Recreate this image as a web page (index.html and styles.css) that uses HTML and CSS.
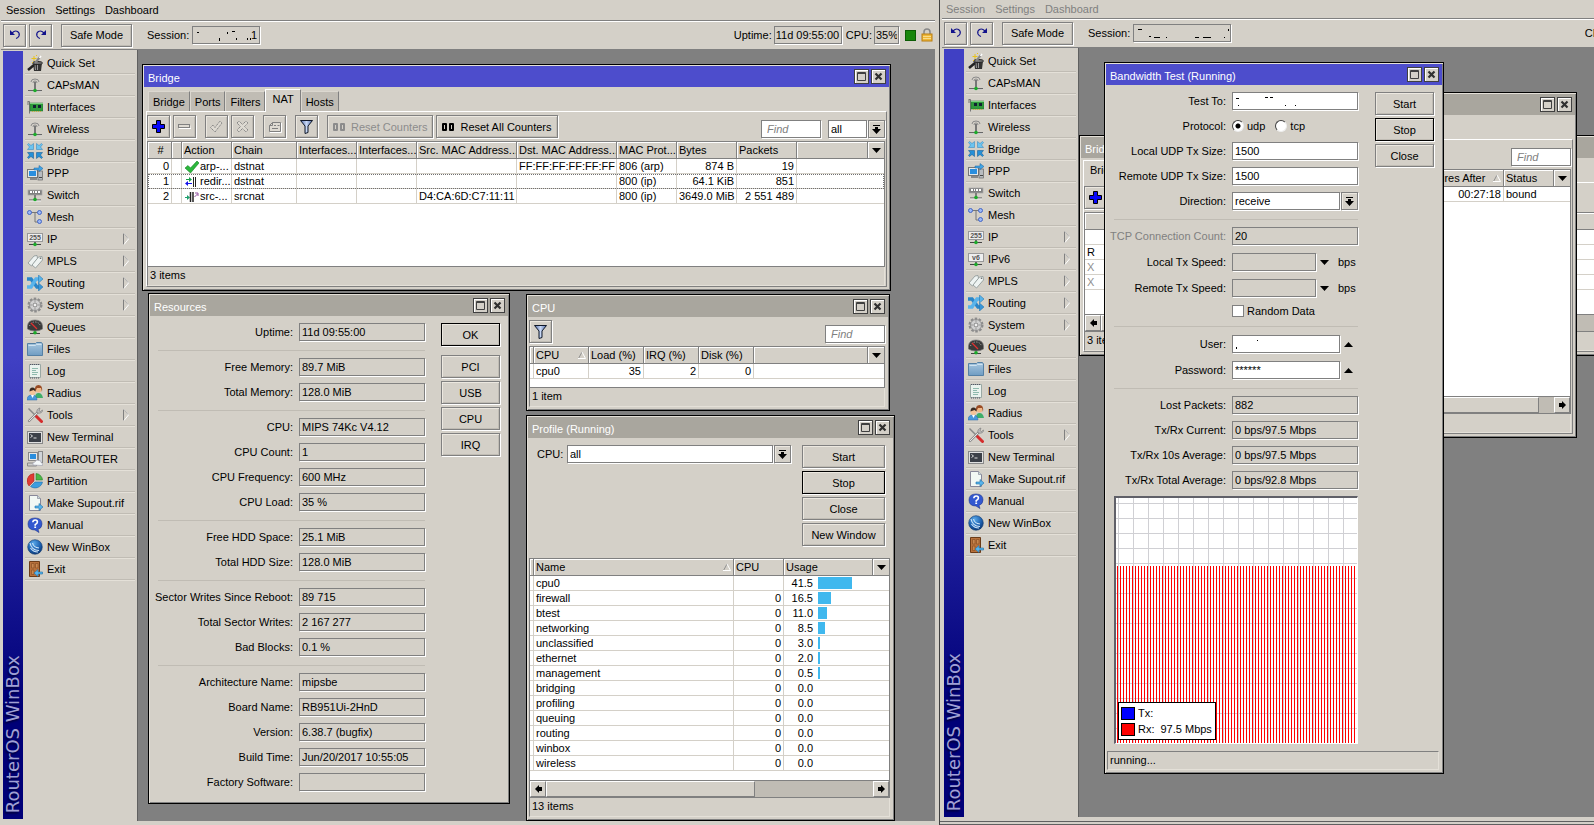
FILE: index.html
```html
<!DOCTYPE html>
<html lang="en">
<head>
<meta charset="utf-8">
<title>RouterOS WinBox</title>
<link rel="stylesheet" href="styles.css">
</head>
<body>
<svg class="sprite" aria-hidden="true">
  <defs>
    <linearGradient id="g-folder" x1="0" y1="0" x2="0" y2="1"><stop offset="0" stop-color="#a9c8e0"/><stop offset="1" stop-color="#6f9cc2"/></linearGradient>
    <linearGradient id="g-funnel" x1="0" y1="0" x2="1" y2="0"><stop offset="0" stop-color="#4d68a8"/><stop offset=".5" stop-color="#c8d8f4"/><stop offset="1" stop-color="#4d68a8"/></linearGradient>
    <radialGradient id="g-ball" cx=".4" cy=".25" r=".8"><stop offset="0" stop-color="#5aa8e8"/><stop offset=".6" stop-color="#1c5fae"/><stop offset="1" stop-color="#0a3470"/></radialGradient>
    <pattern id="p-grid" x="2" y="5" width="15" height="15" patternUnits="userSpaceOnUse"><path d="M0 0H15V1H1V15H0Z" fill="#d0d0d4"/></pattern>
    <pattern id="p-rx" x="1" y="0" width="3" height="3" patternUnits="userSpaceOnUse"><rect width="1" height="3" fill="#f00"/></pattern>
  </defs>
  <symbol id="i-quick" viewBox="0 0 16 16"><path d="M6 8h9l-1 8H7z" fill="#333"/><path d="M8 10l.5 5M10.500 10v5" stroke="#999" stroke-width="1"/><ellipse cx="10.500" cy="8" rx="5" ry="1.500" fill="#777" stroke="#222"/><path d="M1 15l6-5" stroke="#222" stroke-width="2.500"/><path d="M8 8l5-6" stroke="#888" stroke-width="2"/><path d="M12.500 3l1.500-2" stroke="#fff" stroke-width="1.500"/><path d="M7 1v5M4.500 3.500h5M5 7.500h1M9 .500h1" stroke="#e8c21c"/></symbol>
  <symbol id="i-ant" viewBox="0 0 16 16"><path d="M4 5q0-3 4-3t4 3M6 6q0-2 2-2t2 2" fill="none" stroke="#8a8a8a"/><path d="M8 5v8" stroke="#777" stroke-width="2"/><path d="M1 13.500h14" stroke="#666"/><path d="M2 14.500h12" stroke="#ccc"/><circle cx="8" cy="13.500" r="1.800" fill="#1cab2a"/></symbol>
  <symbol id="i-card" viewBox="0 0 16 16"><path d="M.5 2.500h2v12M1 3v3" stroke="#777" fill="none"/><rect x="3" y="4" width="13" height="8" fill="#2f9a3c" stroke="#1c6c28" stroke-width=".5"/><path d="M3 4.500h13" stroke="#7fce84"/><rect x="6" y="6" width="3" height="3" fill="#123"/><rect x="11" y="6" width="3" height="3" fill="#123"/><path d="M5 12.500h10" stroke="#c8b040" stroke-dasharray="1 1"/></symbol>
  <symbol id="i-bridge" viewBox="0 0 16 16"><g fill="#6cc4f0" stroke="#2c7eb8" stroke-width=".5"><path d="M.5 1.500l1-1 2.500 2L6.500.500v6h-6l2-2.500z"/><path d="M15.500 1.500l-1-1-2.500 2L9.500.500v6h6l-2-2.500z"/></g><g fill="#2490d8" stroke="#0d5088" stroke-width=".5"><path d="M.5 14.500l1 1 2.500-2 2.500 2v-6h-6l2 2.500z"/><path d="M15.500 14.500l-1 1-2.500-2-2.500 2v-6h6l-2 2.500z"/></g></symbol>
  <symbol id="i-ppp" viewBox="0 0 16 16"><rect x=".5" y="4.500" width="10" height="8" fill="#e4e8ea" stroke="#777"/><rect x="2" y="6" width="7" height="5" fill="#2a8ede"/><path d="M3 14h7" stroke="#888" stroke-width="2"/><rect x="11" y="6" width="4.500" height="9" fill="#b8bcc0" stroke="#666" stroke-width=".7"/><path d="M12 12.500h3" stroke="#444"/><path d="M7 3h5V.500l4 3-4 3V5H7z" fill="#40a4e4" stroke="#1860a0" stroke-width=".5"/></symbol>
  <symbol id="i-switch" viewBox="0 0 16 16"><rect x="1" y="3" width="14" height="5" fill="#808080" stroke="#aaa" stroke-width=".7"/><path d="M3 5h2M6 5h1M8 5h2M11 5h2" stroke="#fff" stroke-width="2"/><path d="M8 8v5" stroke="#666" stroke-width="1.500"/><path d="M2 13h12" stroke="#555"/><path d="M2 14h12" stroke="#eee"/><circle cx="8" cy="12.500" r="1.800" fill="#1cab2a"/></symbol>
  <symbol id="i-mesh" viewBox="0 0 16 16"><path d="M3 3.500h10M8 4v9h5" stroke="#777" fill="none"/><g fill="#9cb8f8" stroke="#4466c4"><circle cx="2.500" cy="3.500" r="2"/><circle cx="12.500" cy="3.500" r="2"/><circle cx="12.500" cy="12.500" r="2"/></g></symbol>
  <symbol id="i-sign" viewBox="0 0 16 16"><rect x=".5" y="2.500" width="15" height="8" fill="#eee" stroke="#999"/><path d="M8 11v2" stroke="#666" stroke-width="2"/><path d="M2 13.500h12" stroke="#444"/><circle cx="8" cy="13.500" r="1.800" fill="#1cab2a"/></symbol>
  <symbol id="i-mpls" viewBox="0 0 16 16"><g fill="#eef3f2" stroke="#8a9494" stroke-width=".8"><path d="M1 10l6-7 3-.5.5 3-6 7.500z"/><path d="M5 12l6.500-8 3.500-.5.5 3.500-7 8z"/></g><circle cx="13.500" cy="5.300" r=".8" fill="#666"/></symbol>
  <symbol id="i-routing" viewBox="0 0 16 16"><path d="M0 4h4l6 8h2" fill="none" stroke="#2a86c8" stroke-width="3.500"/><path d="M0 12h4l5-8h3" fill="none" stroke="#5ab4ea" stroke-width="3.500"/><path d="M11.500 0l4.500 4-4.500 4z" fill="#5ab4ea" stroke="#1c6ea8" stroke-width=".5"/><path d="M11.500 8l4.500 4-4.500 4z" fill="#3a96d8" stroke="#1c6ea8" stroke-width=".5"/></symbol>
  <symbol id="i-gear" viewBox="0 0 16 16"><circle cx="8" cy="8" r="6.300" fill="none" stroke="#8c8c8c" stroke-width="2.400" stroke-dasharray="2.500 1.450"/><circle cx="8" cy="8" r="5.500" fill="#d0d0d0" stroke="#888" stroke-width=".8"/><circle cx="8" cy="8" r="2" fill="#f0f0f0" stroke="#888"/><path d="M8 3v2M8 11v2M3 8h2M11 8h2" stroke="#999"/></symbol>
  <symbol id="i-queue" viewBox="0 0 16 16"><path d="M.5 10V7Q1 1 8 1t7.500 6v3q-3 2-7.500 2T.5 10z" fill="#3a3a3a" stroke="#777" stroke-width=".7"/><path d="M2.500 7Q4 3 8 3t5.500 4" fill="none" stroke="#bbb" stroke-dasharray="1 1.500"/><path d="M4 4l6 6" stroke="#e03030" stroke-width="1.300"/><path d="M3 14.500h10" stroke="#444"/><circle cx="8" cy="13.800" r="1.800" fill="#1cab2a"/></symbol>
  <symbol id="i-folder" viewBox="0 0 16 16"><path d="M.5 14.500V2.500H8.500L9.500 1.500H14.500L15.500 3V14.500z" fill="url(#g-folder)" stroke="#5580a4"/><path d="M1.500 4.500h7l1-1h5" fill="none" stroke="#cfe2f0"/></symbol>
  <symbol id="i-log" viewBox="0 0 16 16"><path d="M2.500 1.500h11v13h-11z" fill="#eaf2ee" stroke="#9aa8a4"/><path d="M3 1.500h10M3 15h10" stroke="#556" stroke-dasharray="1 1"/><path d="M5 5.500h6M5 7.500h4M5 9.500h6M5 11.500h5" stroke="#8fbaae"/></symbol>
  <symbol id="i-radius" viewBox="0 0 16 16"><path d="M8 13q0-5 3.500-5t4.500 5z" fill="#3fae6a"/><circle cx="11.500" cy="4.500" r="3" fill="#f0b888"/><path d="M8 7q-1-7 3.500-7T15 7l-1-4h-4z" fill="#9a4c24"/><path d="M0 15q0-5 5-5t5 5z" fill="#4a98dc" stroke="#2a68a8" stroke-width=".5"/><path d="M4 10l1.500 3L7 10z" fill="#fff"/><circle cx="5.500" cy="7" r="3" fill="#f6c498"/><path d="M2.500 6.500q0-4 3-4t3 4l-2-1.500z" fill="#3a2c24"/></symbol>
  <symbol id="i-tools" viewBox="0 0 16 16"><path d="M1.500 1.500l7 7" stroke="#888" stroke-width="1.500"/><path d="M9 9l5.500 5.500" stroke="#d42c2c" stroke-width="3" stroke-linecap="round"/><path d="M2 14L10.500 5.500" stroke="#8e8e8e" stroke-width="2.400" stroke-linecap="round"/><path d="M2 14L10.500 5.500" stroke="#e4e4e4"/><path d="M10 6q-1-4 3-5l-1 2.500 1.500 1L15.500 3q0 4-5.500 3z" fill="#bbb" stroke="#777" stroke-width=".6"/></symbol>
  <symbol id="i-term" viewBox="0 0 16 16"><rect x=".5" y="2.500" width="15" height="12" fill="#e0e0e0" stroke="#888"/><rect x="2" y="4" width="12" height="9" fill="#3c4048"/><path d="M3.500 5.500l2 1.500-2 1.500M6.500 9h3" stroke="#eee" fill="none" stroke-width=".9"/></symbol>
  <symbol id="i-meta" viewBox="0 0 16 16"><rect x="1.500" y="1.500" width="9" height="8" fill="#e8e8e8" stroke="#888"/><rect x="3" y="3" width="6" height="5" fill="#2a8ede"/><rect x="11.500" y=".5" width="4" height="11" fill="#d0d4d8" stroke="#888"/><path d="M.5 12h9v3h-9z" fill="#ccc" stroke="#888"/><path d="M6 14q-1-3 2-3 1-3 4-1.500 2-.5 2 2 2 0 1.500 3z" fill="#f4f8fa" stroke="#99a" stroke-width=".6"/></symbol>
  <symbol id="i-pie" viewBox="0 0 16 16"><path d="M7 8V.500A7.500 7.500 0 0 0 2 13z" fill="#e03c34" stroke="#a01c18" stroke-width=".5"/><path d="M9 7V.500A7 7 0 0 1 15.500 7z" fill="#4cb848" stroke="#227020" stroke-width=".5"/><path d="M8 9h7.500A7.500 7 0 0 1 3.500 13.500z" fill="#3c9ee0" stroke="#1a609c" stroke-width=".5"/></symbol>
  <symbol id="i-sup" viewBox="0 0 16 16"><path d="M2.500.500h8l3 3v12h-11z" fill="#f2f8f4" stroke="#889"/><path d="M10.500.500v3h3" fill="#cdd" stroke="#889" stroke-width=".7"/><path d="M8 11h4V8.500l4 3.500-4 3.500V13H8z" fill="#58b4ec" stroke="#1c6ea8" stroke-width=".6"/></symbol>
  <symbol id="i-man" viewBox="0 0 16 16"><path d="M8 1q7 0 7 6 0 4-4 5.500L12 15.500 8 13Q1 13 1 7q0-6 7-6z" fill="#3358d0" stroke="#1c3490" stroke-width=".6"/><path d="M5.800 5.300Q6 3 8.200 3t2.200 2q0 1.200-2.200 2.700v1" fill="none" stroke="#fff" stroke-width="1.600"/><rect x="7.300" y="9.500" width="1.800" height="1.500" fill="#fff"/></symbol>
  <symbol id="i-win" viewBox="0 0 16 16"><circle cx="8" cy="8" r="7.300" fill="url(#g-ball)" stroke="#123c70" stroke-width=".6"/><path d="M3 4q1.500 7.500 9 7.500M5.500 4q1 4.500 6.500 5M3.500 9q2.500 4 7.500 4" fill="none" stroke="#cfe6fa" stroke-width="1.100"/></symbol>
  <symbol id="i-exit" viewBox="0 0 16 16"><path d="M2.500.500h10v15h-10z" fill="#b8713c" stroke="#6c3c18"/><path d="M4.500 2.500h2.500v4.500h-2.500zM8.500 2.500h2.500v4.500h-2.500zM4.500 9h2.500v4.500h-2.500z" fill="#c98850" stroke="#8a5024" stroke-width=".7"/><path d="M15.500 11H11V8.500L7 12l4 3.500V13h4.500z" fill="#58b4ec" stroke="#1c6ea8" stroke-width=".6"/></symbol>
  <symbol id="i-sub" viewBox="0 0 6 12"><path d="M.5 11.500V.500" stroke="#808080"/><path d="M1 .500L5.500 6 1 11.500" fill="none" stroke="#fff"/><path d="M1 .500l4 5" stroke="#999" stroke-width=".8"/></symbol>
  <symbol id="i-undo" viewBox="0 0 12 12"><path d="M1 1v5h5z" fill="#14148c"/><path d="M3 4Q6 1 8.500 2.500 11 4 10 7q-1 2-3 2.500" fill="none" stroke="#14148c" stroke-width="1.200"/></symbol>
  <symbol id="i-max" viewBox="0 0 11 11"><path d="M1.500 1.500h8v8h-8zM1 2.500h9" fill="none" stroke="#404040"/></symbol>
  <symbol id="i-close" viewBox="0 0 11 11"><path d="M2.500 2.500l6 6M8.500 2.500l-6 6" stroke="#303030" stroke-width="2.200"/></symbol>
  <symbol id="i-plus" viewBox="0 0 13 13"><path d="M4.500.500h4v4h4v4h-4v4h-4v-4h-4v-4h4z" fill="#0808f8" stroke="#000"/></symbol>
  <symbol id="i-minus" viewBox="0 0 13 5"><rect x=".5" y=".5" width="11" height="3" fill="#dedad2" stroke="#808080"/><path d="M1 4.500h12v-3" fill="none" stroke="#fff"/></symbol>
  <symbol id="i-check" viewBox="0 0 13 13"><path d="M.5 7.500L3 5l2 2.500L10 1l2 2-7 9z" fill="#dedad2" stroke="#808080" stroke-dasharray="1.300 .7"/></symbol>
  <symbol id="i-cross" viewBox="0 0 13 13"><path d="M1 3l2-2 3.500 3.500L10 1l2 2-3.500 3.500L12 10l-2 2-3.500-3.500L3 12l-2-2 3.500-3.500z" fill="#dedad2" stroke="#808080" stroke-dasharray="1.300 .7"/></symbol>
  <symbol id="i-note" viewBox="0 0 14 12"><path d="M1.500 4.500l3-3h8v9h-11z" fill="#dedad2" stroke="#808080"/><path d="M4.500 1.500v3h-3M6 4.500h2M9.500 4.500h2M4 7.500h6" fill="none" stroke="#808080"/><path d="M2 11.500h11.500V2" fill="none" stroke="#fff"/></symbol>
  <symbol id="i-funnel" viewBox="0 0 13 14"><path d="M.5.500h12L8 6v6.500l-3 1V6z" fill="url(#g-funnel)" stroke="#101828"/></symbol>
  <symbol id="i-oo" viewBox="0 0 14 8"><path d="M2 1h3v6H2zM9 1h3v6H9z" fill="none" stroke="currentColor" stroke-width="2" stroke-linejoin="round"/></symbol>
  <symbol id="i-tri" viewBox="0 0 9 5"><path d="M0 0h9L4.500 5z"/></symbol>
  <symbol id="i-up" viewBox="0 0 9 5"><path d="M0 5h9L4.500 0z"/></symbol>
  <symbol id="i-drop" viewBox="0 0 9 9"><path d="M1 0h7v1H1zM3 2h3v2h3L4.500 9 0 4h3z"/></symbol>
  <symbol id="i-left" viewBox="0 0 7 8"><path d="M4 0v2h3v4H4v2L0 4z"/></symbol>
  <symbol id="i-right" viewBox="0 0 7 8"><path d="M3 0v2H0v4h3v2l4-4z"/></symbol>
  <symbol id="i-sort" viewBox="0 0 8 8"><path d="M.5 7.500L4 1" stroke="#909090"/><path d="M4 1l3.500 6.500H0" fill="none" stroke="#fff"/></symbol>
  <symbol id="i-accept" viewBox="0 0 14 12"><path d="M0 7l3-2.500 2.500 2.500L12 0l2 2-8.500 10z" fill="#2cb83c" stroke="#138024" stroke-width=".6"/></symbol>
  <symbol id="i-redir" viewBox="0 0 14 10"><path d="M1 2.500h4" stroke="#1ca04c"/><path d="M4 0l3 2.500L4 5z" fill="#1ca04c"/><path d="M3 6.500h4" stroke="#1414e8"/><path d="M3 4L0 6.500 3 9z" fill="#1414e8"/><path d="M8.500 0v10M10.500 0v10" stroke="#222"/></symbol>
  <symbol id="i-src" viewBox="0 0 14 10"><path d="M0 5.500h3" stroke="#1ca06c"/><path d="M2 3l3 2.500L2 8z" fill="#1ca06c"/><path d="M5.500 0v10M8 0v10" stroke="#222" stroke-width="1.500"/><path d="M9.500 5l3-3M10 1h3v3" fill="none" stroke="#9050a0"/></symbol>
  <symbol id="i-lock" viewBox="0 0 12 14"><path d="M3 7V4q0-3 3-3t3 3v3" fill="none" stroke="#888" stroke-width="1.500"/><rect x="1" y="6" width="10" height="7" fill="#f0b838" stroke="#b87c10"/><path d="M2 8.500h8M2 10.500h8" stroke="#fbdc88"/></symbol>
</svg>

<div class="screen">

<section class="app app-left">
  <nav class="menubar"><button>Session</button><button>Settings</button><button>Dashboard</button></nav>
  <header class="topbar">
    <button class="btn tool" aria-label="Undo"><svg width="12" height="12"><use href="#i-undo"/></svg></button>
    <button class="btn tool" aria-label="Redo"><svg class="flip" width="12" height="12"><use href="#i-undo"/></svg></button>
    <button class="btn safe">Safe Mode</button>
    <label for="sess-a" class="sess-label">Session:</label><input id="sess-a" class="field ro sess-a" value="1" readonly>
    <div class="stats">
      <label for="upt">Uptime:</label><input id="upt" class="field ro upt" value="11d 09:55:00" readonly>
      <label for="cpul">CPU:</label><input id="cpul" class="field ro cpul" value="35%" readonly>
      <span class="led"></span>
      <svg width="12" height="14"><use href="#i-lock"/></svg>
    </div>
  </header>
  <div class="work">
    <aside class="sidebar">
      <div class="brand"><span>RouterOS WinBox</span></div>
      <nav class="menu">
        <a href="#"><svg><use href="#i-quick"/></svg>Quick Set</a>
        <a href="#"><svg><use href="#i-ant"/></svg>CAPsMAN</a>
        <a href="#"><svg><use href="#i-card"/></svg>Interfaces</a>
        <a href="#"><svg><use href="#i-ant"/></svg>Wireless</a>
        <a href="#"><svg><use href="#i-bridge"/></svg>Bridge</a>
        <a href="#"><svg><use href="#i-ppp"/></svg>PPP</a>
        <a href="#"><svg><use href="#i-switch"/></svg>Switch</a>
        <a href="#"><svg><use href="#i-mesh"/></svg>Mesh</a>
        <a href="#"><svg><use href="#i-sign"/><text x="8" y="9" text-anchor="middle" class="ico-num">255</text></svg>IP<svg class="sub"><use href="#i-sub"/></svg></a>
        <a href="#"><svg><use href="#i-mpls"/></svg>MPLS<svg class="sub"><use href="#i-sub"/></svg></a>
        <a href="#"><svg><use href="#i-routing"/></svg>Routing<svg class="sub"><use href="#i-sub"/></svg></a>
        <a href="#"><svg><use href="#i-gear"/></svg>System<svg class="sub"><use href="#i-sub"/></svg></a>
        <a href="#"><svg><use href="#i-queue"/></svg>Queues</a>
        <a href="#"><svg><use href="#i-folder"/></svg>Files</a>
        <a href="#"><svg><use href="#i-log"/></svg>Log</a>
        <a href="#"><svg><use href="#i-radius"/></svg>Radius</a>
        <a href="#"><svg><use href="#i-tools"/></svg>Tools<svg class="sub"><use href="#i-sub"/></svg></a>
        <a href="#"><svg><use href="#i-term"/></svg>New Terminal</a>
        <a href="#"><svg><use href="#i-meta"/></svg>MetaROUTER</a>
        <a href="#"><svg><use href="#i-pie"/></svg>Partition</a>
        <a href="#"><svg><use href="#i-sup"/></svg>Make Supout.rif</a>
        <a href="#"><svg><use href="#i-man"/></svg>Manual</a>
        <a href="#"><svg><use href="#i-win"/></svg>New WinBox</a>
        <a href="#"><svg><use href="#i-exit"/></svg>Exit</a>
      </nav>
    </aside>
    <main class="desktop">

      <section class="win active w-bridge">
        <div class="title"><h2>Bridge</h2><button aria-label="Maximize"><svg><use href="#i-max"/></svg></button><button aria-label="Close"><svg><use href="#i-close"/></svg></button></div>
        <div class="tabs"><button>Bridge</button><button>Ports</button><button>Filters</button><button class="on">NAT</button><button>Hosts</button></div>
        <div class="panel">
          <div class="tools">
            <button class="btn tool" aria-label="Add"><svg width="13" height="13"><use href="#i-plus"/></svg></button>
            <button class="btn tool" aria-label="Remove"><svg width="13" height="5"><use href="#i-minus"/></svg></button>
            <button class="btn tool gap" aria-label="Enable"><svg width="13" height="13"><use href="#i-check"/></svg></button>
            <button class="btn tool" aria-label="Disable"><svg width="13" height="13"><use href="#i-cross"/></svg></button>
            <button class="btn tool gap" aria-label="Comment"><svg width="14" height="12"><use href="#i-note"/></svg></button>
            <button class="btn tool gap" aria-label="Filter"><svg width="13" height="14"><use href="#i-funnel"/></svg></button>
            <button class="btn wide gap" disabled><svg width="14" height="8"><use href="#i-oo"/></svg>Reset Counters</button>
            <button class="btn wide"><svg width="14" height="8"><use href="#i-oo"/></svg>Reset All Counters</button>
            <input class="field find" placeholder="Find" aria-label="Find">
            <div class="combo all"><select class="field" aria-label="Chain"><option>all</option></select><button class="drop" aria-label="Open list"><svg width="9" height="9"><use href="#i-drop"/></svg></button></div>
          </div>
          <div class="grid">
            <table>
              <colgroup><col class="c24"><col class="c10"><col class="c50"><col class="c65"><col class="c60"><col class="c60"><col class="c100"><col class="c100"><col class="c60"><col class="c60"><col class="c60"><col><col class="c16"></colgroup>
              <thead><tr><th class="mid">#</th><th></th><th>Action</th><th>Chain</th><th>Interfaces...</th><th>Interfaces...</th><th>Src. MAC Address...</th><th>Dst. MAC Address...</th><th>MAC Prot...</th><th>Bytes</th><th>Packets</th><th></th><th class="pick"><button aria-label="Columns"><svg width="9" height="5"><use href="#i-tri"/></svg></button></th></tr></thead>
              <tbody>
                <tr><td class="num">0</td><td></td><td class="act"><svg width="14" height="12"><use href="#i-accept"/></svg>arp-...</td><td>dstnat</td><td></td><td></td><td></td><td>FF:FF:FF:FF:FF:FF</td><td>806 (arp)</td><td class="num">874 B</td><td class="num">19</td><td colspan="2"></td></tr>
                <tr class="focus"><td class="num">1</td><td></td><td class="act"><svg width="14" height="10"><use href="#i-redir"/></svg>redir...</td><td>dstnat</td><td></td><td></td><td></td><td></td><td>800 (ip)</td><td class="num">64.1 KiB</td><td class="num">851</td><td colspan="2"></td></tr>
                <tr><td class="num">2</td><td></td><td class="act"><svg width="14" height="10"><use href="#i-src"/></svg>src-...</td><td>srcnat</td><td></td><td></td><td>D4:CA:6D:C7:11:11</td><td></td><td>800 (ip)</td><td class="num">3649.0 MiB</td><td class="num">2 551 489</td><td colspan="2"></td></tr>
              </tbody>
            </table>
          </div>
          <div class="status">3 items</div>
        </div>
      </section>

      <section class="win w-res">
        <div class="title"><h2>Resources</h2><button aria-label="Maximize"><svg><use href="#i-max"/></svg></button><button aria-label="Close"><svg><use href="#i-close"/></svg></button></div>
        <div class="dialog">
          <form class="form">
            <div class="row"><label for="r1">Uptime:</label><input id="r1" class="field ro" value="11d 09:55:00" readonly></div>
            <hr>
            <div class="row"><label for="r2">Free Memory:</label><input id="r2" class="field ro" value="89.7 MiB" readonly></div>
            <div class="row"><label for="r3">Total Memory:</label><input id="r3" class="field ro" value="128.0 MiB" readonly></div>
            <hr>
            <div class="row"><label for="r4">CPU:</label><input id="r4" class="field ro" value="MIPS 74Kc V4.12" readonly></div>
            <div class="row"><label for="r5">CPU Count:</label><input id="r5" class="field ro" value="1" readonly></div>
            <div class="row"><label for="r6">CPU Frequency:</label><input id="r6" class="field ro" value="600 MHz" readonly></div>
            <div class="row"><label for="r7">CPU Load:</label><input id="r7" class="field ro" value="35 %" readonly></div>
            <hr>
            <div class="row"><label for="r8">Free HDD Space:</label><input id="r8" class="field ro" value="25.1 MiB" readonly></div>
            <div class="row"><label for="r9">Total HDD Size:</label><input id="r9" class="field ro" value="128.0 MiB" readonly></div>
            <hr>
            <div class="row"><label for="r10">Sector Writes Since Reboot:</label><input id="r10" class="field ro" value="89 715" readonly></div>
            <div class="row"><label for="r11">Total Sector Writes:</label><input id="r11" class="field ro" value="2 167 277" readonly></div>
            <div class="row"><label for="r12">Bad Blocks:</label><input id="r12" class="field ro" value="0.1 %" readonly></div>
            <hr>
            <div class="row"><label for="r13">Architecture Name:</label><input id="r13" class="field ro" value="mipsbe" readonly></div>
            <div class="row"><label for="r14">Board Name:</label><input id="r14" class="field ro" value="RB951Ui-2HnD" readonly></div>
            <div class="row"><label for="r15">Version:</label><input id="r15" class="field ro" value="6.38.7 (bugfix)" readonly></div>
            <div class="row"><label for="r16">Build Time:</label><input id="r16" class="field ro" value="Jun/20/2017 10:55:05" readonly></div>
            <div class="row"><label for="r17">Factory Software:</label><input id="r17" class="field ro" value="" readonly></div>
          </form>
          <div class="side"><button class="btn default first">OK</button><button class="btn">PCI</button><button class="btn">USB</button><button class="btn">CPU</button><button class="btn">IRQ</button></div>
        </div>
      </section>

      <section class="win w-cpu">
        <div class="title"><h2>CPU</h2><button aria-label="Maximize"><svg><use href="#i-max"/></svg></button><button aria-label="Close"><svg><use href="#i-close"/></svg></button></div>
        <div class="plain">
          <div class="tools"><button class="btn tool" aria-label="Filter"><svg width="13" height="14"><use href="#i-funnel"/></svg></button><input class="field find" placeholder="Find" aria-label="Find"></div>
          <div class="grid">
            <table>
              <colgroup><col class="c4"><col class="c55"><col class="c55"><col class="c55"><col class="c55"><col><col class="c16"></colgroup>
              <thead><tr><th></th><th>CPU<svg class="sort"><use href="#i-sort"/></svg></th><th>Load (%)</th><th>IRQ (%)</th><th>Disk (%)</th><th></th><th class="pick"><button aria-label="Columns"><svg width="9" height="5"><use href="#i-tri"/></svg></button></th></tr></thead>
              <tbody><tr><td></td><td>cpu0</td><td class="num">35</td><td class="num">2</td><td class="num">0</td><td colspan="2"></td></tr></tbody>
            </table>
          </div>
          <div class="status">1 item</div>
        </div>
      </section>

      <section class="win w-prof">
        <div class="title"><h2>Profile (Running)</h2><button aria-label="Maximize"><svg><use href="#i-max"/></svg></button><button aria-label="Close"><svg><use href="#i-close"/></svg></button></div>
        <div class="plain">
          <div class="prof-top">
            <label for="pcpu">CPU:</label>
            <div class="combo"><select id="pcpu" class="field"><option>all</option></select><button class="drop" aria-label="Open list"><svg width="9" height="9"><use href="#i-drop"/></svg></button></div>
            <div class="side big"><button class="btn">Start</button><button class="btn default">Stop</button><button class="btn">Close</button><button class="btn">New Window</button></div>
          </div>
          <div class="grid">
            <table>
              <colgroup><col class="c4"><col class="c200"><col class="c50"><col><col class="c16"></colgroup>
              <thead><tr><th></th><th>Name<svg class="sort"><use href="#i-sort"/></svg></th><th>CPU</th><th>Usage</th><th class="pick"><button aria-label="Columns"><svg width="9" height="5"><use href="#i-tri"/></svg></button></th></tr></thead>
              <tbody>
                <tr><td></td><td>cpu0</td><td></td><td colspan="2"><div class="use"><span>41.5</span><i style="width:34px"></i></div></td></tr>
                <tr><td></td><td>firewall</td><td class="num">0</td><td colspan="2"><div class="use"><span>16.5</span><i style="width:13px"></i></div></td></tr>
                <tr><td></td><td>btest</td><td class="num">0</td><td colspan="2"><div class="use"><span>11.0</span><i style="width:9px"></i></div></td></tr>
                <tr><td></td><td>networking</td><td class="num">0</td><td colspan="2"><div class="use"><span>8.5</span><i style="width:7px"></i></div></td></tr>
                <tr><td></td><td>unclassified</td><td class="num">0</td><td colspan="2"><div class="use"><span>3.0</span><i style="width:2px"></i></div></td></tr>
                <tr><td></td><td>ethernet</td><td class="num">0</td><td colspan="2"><div class="use"><span>2.0</span><i style="width:2px"></i></div></td></tr>
                <tr><td></td><td>management</td><td class="num">0</td><td colspan="2"><div class="use"><span>0.5</span><i style="width:2px"></i></div></td></tr>
                <tr><td></td><td>bridging</td><td class="num">0</td><td colspan="2"><div class="use"><span>0.0</span></div></td></tr>
                <tr><td></td><td>profiling</td><td class="num">0</td><td colspan="2"><div class="use"><span>0.0</span></div></td></tr>
                <tr><td></td><td>queuing</td><td class="num">0</td><td colspan="2"><div class="use"><span>0.0</span></div></td></tr>
                <tr><td></td><td>routing</td><td class="num">0</td><td colspan="2"><div class="use"><span>0.0</span></div></td></tr>
                <tr><td></td><td>winbox</td><td class="num">0</td><td colspan="2"><div class="use"><span>0.0</span></div></td></tr>
                <tr><td></td><td>wireless</td><td class="num">0</td><td colspan="2"><div class="use"><span>0.0</span></div></td></tr>
              </tbody>
            </table>
            <div class="scroll"><button aria-label="Scroll left"><svg width="7" height="8"><use href="#i-left"/></svg></button><div class="track"><div class="thumb"></div></div><button aria-label="Scroll right"><svg width="7" height="8"><use href="#i-right"/></svg></button></div>
          </div>
          <div class="status">13 items</div>
        </div>
      </section>
    </main>
  </div>
</section>

<section class="app app-right">
  <nav class="menubar dim"><button>Session</button><button>Settings</button><button>Dashboard</button></nav>
  <header class="topbar">
    <button class="btn tool" aria-label="Undo"><svg width="12" height="12"><use href="#i-undo"/></svg></button>
    <button class="btn tool" aria-label="Redo"><svg class="flip" width="12" height="12"><use href="#i-undo"/></svg></button>
    <button class="btn safe">Safe Mode</button>
    <label for="sess-b" class="sess-label">Session:</label><input id="sess-b" class="field ro sess-b" value="" readonly>
    <div class="stats cut">CPU:</div>
  </header>
  <div class="work">
    <aside class="sidebar">
      <div class="brand"><span>RouterOS WinBox</span></div>
      <nav class="menu">
        <a href="#"><svg><use href="#i-quick"/></svg>Quick Set</a>
        <a href="#"><svg><use href="#i-ant"/></svg>CAPsMAN</a>
        <a href="#"><svg><use href="#i-card"/></svg>Interfaces</a>
        <a href="#"><svg><use href="#i-ant"/></svg>Wireless</a>
        <a href="#"><svg><use href="#i-bridge"/></svg>Bridge</a>
        <a href="#"><svg><use href="#i-ppp"/></svg>PPP</a>
        <a href="#"><svg><use href="#i-switch"/></svg>Switch</a>
        <a href="#"><svg><use href="#i-mesh"/></svg>Mesh</a>
        <a href="#"><svg><use href="#i-sign"/><text x="8" y="9" text-anchor="middle" class="ico-num">255</text></svg>IP<svg class="sub"><use href="#i-sub"/></svg></a>
        <a href="#"><svg><use href="#i-sign"/><text x="8" y="9" text-anchor="middle" class="ico-num">v6</text></svg>IPv6<svg class="sub"><use href="#i-sub"/></svg></a>
        <a href="#"><svg><use href="#i-mpls"/></svg>MPLS<svg class="sub"><use href="#i-sub"/></svg></a>
        <a href="#"><svg><use href="#i-routing"/></svg>Routing<svg class="sub"><use href="#i-sub"/></svg></a>
        <a href="#"><svg><use href="#i-gear"/></svg>System<svg class="sub"><use href="#i-sub"/></svg></a>
        <a href="#"><svg><use href="#i-queue"/></svg>Queues</a>
        <a href="#"><svg><use href="#i-folder"/></svg>Files</a>
        <a href="#"><svg><use href="#i-log"/></svg>Log</a>
        <a href="#"><svg><use href="#i-radius"/></svg>Radius</a>
        <a href="#"><svg><use href="#i-tools"/></svg>Tools<svg class="sub"><use href="#i-sub"/></svg></a>
        <a href="#"><svg><use href="#i-term"/></svg>New Terminal</a>
        <a href="#"><svg><use href="#i-sup"/></svg>Make Supout.rif</a>
        <a href="#"><svg><use href="#i-man"/></svg>Manual</a>
        <a href="#"><svg><use href="#i-win"/></svg>New WinBox</a>
        <a href="#"><svg><use href="#i-exit"/></svg>Exit</a>
      </nav>
    </aside>
    <main class="desktop">

      <section class="win w-back">
        <div class="title"><h2>Bridge</h2></div>
        <div class="tabs"><button class="on">Bridge</button></div>
        <div class="panel">
          <div class="tools"><button class="btn tool" aria-label="Add"><svg width="13" height="13"><use href="#i-plus"/></svg></button></div>
          <div class="grid">
            <table>
              <colgroup><col></colgroup>
              <thead><tr><th></th></tr></thead>
              <tbody><tr><td></td></tr><tr><td>R</td></tr><tr class="off"><td>X</td></tr><tr class="off"><td>X</td></tr></tbody>
            </table>
            <div class="scroll"><button aria-label="Scroll left"><svg width="7" height="8"><use href="#i-left"/></svg></button><div class="track"><div class="thumb short"></div></div></div>
          </div>
          <div class="status">3 items</div>
        </div>
      </section>

      <section class="win w-dhcp">
        <div class="title"><h2></h2><button aria-label="Maximize"><svg><use href="#i-max"/></svg></button><button aria-label="Close"><svg><use href="#i-close"/></svg></button></div>
        <div class="tabs"></div>
        <div class="panel">
          <div class="tools"><input class="field find" placeholder="Find" aria-label="Find"></div>
          <div class="grid">
            <table>
              <colgroup><col><col class="c83"><col class="c50"><col class="c16"></colgroup>
              <thead><tr><th></th><th>Expires After<svg class="sort"><use href="#i-sort"/></svg></th><th>Status</th><th class="pick"><button aria-label="Columns"><svg width="9" height="5"><use href="#i-tri"/></svg></button></th></tr></thead>
              <tbody><tr><td></td><td class="num">00:27:18</td><td colspan="2">bound</td></tr></tbody>
            </table>
            <div class="scroll"><div class="track"><div class="thumb long"></div></div><button aria-label="Scroll right"><svg width="7" height="8"><use href="#i-right"/></svg></button></div>
          </div>
          <div class="status"></div>
        </div>
      </section>

      <section class="win active w-bt">
        <div class="title"><h2>Bandwidth Test (Running)</h2><button aria-label="Maximize"><svg><use href="#i-max"/></svg></button><button aria-label="Close"><svg><use href="#i-close"/></svg></button></div>
        <div class="dialog">
          <form class="form">
            <div class="row"><label for="b1">Test To:</label><input id="b1" class="field specks-to" value=""></div>
            <div class="row"><span class="lab">Protocol:</span><div class="cell radios"><input type="radio" name="proto" id="pu" checked><label for="pu">udp</label><input type="radio" name="proto" id="pt"><label for="pt">tcp</label></div></div>
            <div class="row"><label for="b2">Local UDP Tx Size:</label><input id="b2" class="field" value="1500"></div>
            <div class="row"><label for="b3">Remote UDP Tx Size:</label><input id="b3" class="field" value="1500"></div>
            <div class="row"><label for="b4">Direction:</label><div class="combo cell"><select id="b4" class="field"><option>receive</option></select><button type="button" class="drop" aria-label="Open list"><svg width="9" height="9"><use href="#i-drop"/></svg></button></div></div>
            <hr>
            <div class="row dim"><label for="b5">TCP Connection Count:</label><input id="b5" class="field ro" value="20" readonly></div>
            <div class="row tall"><label for="b6">Local Tx Speed:</label><div class="cell speed"><input id="b6" class="field ro" readonly><button type="button" class="bare" aria-label="Expand"><svg width="9" height="5"><use href="#i-tri"/></svg></button><span>bps</span></div></div>
            <div class="row tall"><label for="b7">Remote Tx Speed:</label><div class="cell speed"><input id="b7" class="field ro" readonly><button type="button" class="bare" aria-label="Expand"><svg width="9" height="5"><use href="#i-tri"/></svg></button><span>bps</span></div></div>
            <div class="row low"><div class="cell radios"><input type="checkbox" id="rnd"><label for="rnd">Random Data</label></div></div>
            <hr>
            <div class="row tall"><label for="b8">User:</label><div class="cell cred"><input id="b8" class="field specks-user" value=""><button type="button" class="bare" aria-label="Collapse"><svg width="9" height="5"><use href="#i-up"/></svg></button></div></div>
            <div class="row tall"><label for="b9">Password:</label><div class="cell cred"><input id="b9" class="field" value="******"><button type="button" class="bare" aria-label="Collapse"><svg width="9" height="5"><use href="#i-up"/></svg></button></div></div>
            <hr>
            <div class="row"><label for="b10">Lost Packets:</label><input id="b10" class="field ro" value="882" readonly></div>
            <div class="row"><label for="b11">Tx/Rx Current:</label><input id="b11" class="field ro" value="0 bps/97.5 Mbps" readonly></div>
            <div class="row"><label for="b12">Tx/Rx 10s Average:</label><input id="b12" class="field ro" value="0 bps/97.5 Mbps" readonly></div>
            <div class="row"><label for="b13">Tx/Rx Total Average:</label><input id="b13" class="field ro" value="0 bps/92.8 Mbps" readonly></div>
            <div class="chart">
              <svg width="100%" height="100%"><rect width="100%" height="100%" fill="#fff"/><rect width="100%" height="100%" fill="url(#p-grid)"/><rect y="68" width="100%" height="177" fill="url(#p-rx)"/></svg>
              <ul class="legend"><li><i class="tx"></i>Tx:</li><li><i class="rx"></i>Rx:<b>97.5 Mbps</b></li></ul>
            </div>
          </form>
          <div class="side"><button class="btn">Start</button><button class="btn default">Stop</button><button class="btn">Close</button></div>
        </div>
        <div class="status run">running...</div>
      </section>
    </main>
  </div>
</section>
</div>
</body>
</html>
```

FILE: styles.css
```css
:root {
  --face: #d4d0c8;
  --line: #808080;
  --lite: #fff;
  --shade: #c0bcb4;
}
* { box-sizing: border-box; }
body {
  margin: 0;
  background: var(--face);
  color: #000;
  font: 11px/14px "Liberation Sans", Arial, sans-serif;
}
button, input, select { font: inherit; color: inherit; margin: 0; padding: 0; border-radius: 0; }
button { border: 0; background: none; }
svg { display: block; flex: none; }
.sprite { position: absolute; width: 0; height: 0; }
.ico-num { font: bold 7px/7px "Liberation Sans", Arial, sans-serif; fill: #555; }
.flip { transform: scaleX(-1); }

.screen { display: grid; grid-template-columns: 940fr 654fr; height: 100vh; overflow: hidden; }
.app { display: flex; flex-direction: column; min-width: 0; overflow: hidden; background: var(--face); }
.app-left { padding: 0 4px 4px 1px; border-right: 1px solid #404040; }
.app-right { padding: 0 0 4px 2px; border-bottom: 4px double #606060; }

.menubar { display: flex; flex: none; gap: 10px; height: 21px; padding: 0 5px; border-bottom: 1px solid var(--line); box-shadow: 0 1px var(--lite); }
.app-right .menubar { height: 19px; padding: 0 4px; }
.menubar button { line-height: 20px; }
.app-right .menubar button { line-height: 16px; }
.dim, .dim button { color: #808080; }

.topbar { display: flex; flex: none; align-items: center; gap: 3px; height: 29px; padding: 0 2px; border-bottom: 1px solid var(--line); }
.safe { width: 71px; margin-left: 6px; }
.sess-label { margin-left: 12px; }
.topbar .sess-a {
  width: 68px; text-align: right; flex: none;
  background: linear-gradient(#000, #000) 4px 5px / 2px 1px no-repeat, linear-gradient(#000, #000) 26px 11px / 1px 3px no-repeat,
    linear-gradient(#000, #000) 34px 5px / 1px 2px no-repeat, linear-gradient(#000, #000) 39px 4px / 3px 1px no-repeat,
    linear-gradient(#000, #000) 43px 11px / 1px 2px no-repeat, linear-gradient(#000, #000) 54px 11px / 1px 2px no-repeat,
    linear-gradient(#000, #000) 57px 11px / 1px 2px no-repeat, var(--face);
}
.topbar .sess-b {
  width: 98px; flex: none;
  background: linear-gradient(#000, #000) 4px 4px / 4px 1px no-repeat, linear-gradient(#000, #000) 15px 11px / 2px 1px no-repeat,
    linear-gradient(#000, #000) 20px 12px / 6px 1px no-repeat, linear-gradient(#000, #000) 32px 12px / 1px 1px no-repeat,
    linear-gradient(#000, #000) 61px 12px / 4px 1px no-repeat, linear-gradient(#000, #000) 69px 12px / 8px 1px no-repeat,
    linear-gradient(#000, #000) 90px 12px / 1px 1px no-repeat, linear-gradient(#000, #000) 94px 4px / 1px 2px no-repeat, var(--face);
}
.stats { display: flex; align-items: center; gap: 2px; margin-left: auto; }
.topbar .upt { width: 68px; padding: 0 1px; margin-right: 2px; }
.topbar .cpul { width: 25px; padding: 0 1px; }
.stats.cut { margin-right: -19px; }
.led { width: 11px; height: 11px; margin: 0 3px 0 4px; background: #18860c; border: 1px solid #0c5c04; }

.work { display: flex; flex: 1; min-height: 0; }
.sidebar { display: flex; flex: none; gap: 2px; width: 137px; padding: 1px 2px 2px; border-right: 1px solid #606060; }
.app-right .sidebar { padding-bottom: 0; }
.brand { flex: none; display: flex; width: 20px; background: linear-gradient(#4040c4 40%, #000078 85%); }
.brand span { writing-mode: vertical-rl; transform: rotate(180deg); margin-top: auto; padding-top: 6px; font: 18px/20px "DejaVu Sans", sans-serif; color: #a0a0d4; text-shadow: -2px -1px 2px #00003c; }
.menu { flex: 1; padding-top: 1px; }
.menu a { display: flex; align-items: center; height: 22px; padding: 0 6px 0 2px; gap: 4px; border-bottom: 1px solid var(--shade); box-shadow: 0 1px #e4e0d8; color: #000; text-decoration: none; white-space: nowrap; }
.menu svg { width: 16px; height: 16px; }
.menu .sub { width: 6px; height: 12px; margin-left: auto; }
.desktop { position: relative; flex: 1; min-width: 0; overflow: hidden; background: #808080; }

.btn { display: flex; flex: none; align-items: center; justify-content: center; height: 23px; border: 1px solid #808080; background: var(--face); box-shadow: inset 1px 1px #ece8e0, inset -1px -1px var(--shade), 1px 1px var(--lite); }
.btn:disabled { color: #8c8c8c; }
.tool { width: 23px; }
.default { border-color: #000; }
.field { width: 126px; height: 18px; border: 1px solid var(--line); background: #fff; box-shadow: 1px 1px var(--lite); padding: 0 2px; outline: 0; appearance: none; }
.ro { background: var(--face); }
.find { width: 60px; margin-left: auto; padding: 0 5px; font-style: italic; }
.find::placeholder { color: #808080; }
.combo { display: flex; flex: 1; gap: 1px; }
.combo select { flex: 1; width: auto; min-width: 0; }
.drop { display: grid; place-items: center; width: 17px; height: 18px; border: 1px solid var(--line); box-shadow: inset 1px 1px #ece8e0, 1px 1px var(--lite); }

.win { position: absolute; z-index: 0; display: flex; flex-direction: column; border: 1px solid #000; padding: 1px; background: var(--face); box-shadow: inset 1px 1px #e4e0d8, inset -1px -1px #808080; }
.title { display: flex; flex: none; align-items: center; gap: 2px; height: 21px; padding: 0 3px; background: #a9a69e; color: #fff; }
.active > .title { background: #4d4dcc; }
.title h2 { flex: 1; margin: 0; font: inherit; padding: 2px 1px 0; }
.title button { display: grid; place-items: center; width: 15px; height: 15px; border: 1px solid #404040; background: var(--face); box-shadow: inset 1px 1px #fff; }
.title button svg { width: 11px; height: 11px; }
.w-bridge { left: 4px; top: 14px; width: 749px; height: 227px; }
.w-res { left: 10px; top: 243px; width: 362px; height: 511px; }
.w-cpu { left: 388px; top: 244px; width: 364px; height: 117px; }
.w-prof { left: 388px; top: 365px; width: 369px; height: 406px; }
.w-back { left: 0; top: 87px; width: 540px; height: 221px; }
.w-dhcp { left: 161px; top: 44px; width: 337px; height: 346px; }
.w-bt { left: 25px; top: 14px; width: 340px; }

.tabs { display: flex; flex: none; align-items: flex-end; height: 24px; padding: 0 4px; }
.tabs button { height: 20px; padding: 0 4px; background: var(--shade); border: solid; border-width: 1px 1px 0; border-color: #dcd8d0 #808080 #808080 #dcd8d0; }
.tabs .on { position: relative; z-index: 1; height: 23px; margin: 0 0 -1px; padding: 0 6px 4px; background: var(--face); border-color: #fff #808080 #fff #fff; }
.w-back .tabs { padding: 0 2px; }
.panel { display: flex; flex: 1; flex-direction: column; min-height: 0; margin: 0 2px 2px; padding-right: 1px; border: 1px solid; border-color: #fff #808080 #808080 #fff; }
.plain { display: flex; flex: 1; flex-direction: column; min-height: 0; padding: 0 3px 2px 1px; }
.tools { display: flex; flex: none; align-items: flex-end; gap: 3px; height: 29px; padding-bottom: 3px; }
.tools .gap { margin-left: 6px; }
.wide { gap: 5px; padding: 0 5px 0 4px; }
.all { flex: none; width: 57px; margin-left: 4px; }

.grid { display: flex; flex: 1; flex-direction: column; min-height: 0; background: #fff; border: 1px solid var(--line); overflow: hidden; }
table { width: 100%; table-layout: fixed; border-collapse: separate; border-spacing: 0; }
th, td { padding: 0 2px; overflow: hidden; white-space: nowrap; text-align: left; font-weight: normal; }
th { height: 17px; padding: 0 0 0 2px; background: var(--face); border-right: 1px solid var(--line); border-bottom: 1px solid var(--line); box-shadow: inset 1px 1px #fff; line-height: 14px; }
td { height: 15px; border-right: 1px solid var(--face); border-bottom: 1px solid var(--face); line-height: 14px; }
th:last-child, td:last-child { border-right: 0; }
.mid { text-align: center; }
.num { text-align: right; }
.act svg { display: inline-block; vertical-align: middle; margin: 0 1px 0 1px; }
.focus { outline: 1px dotted #707070; outline-offset: -1px; }
.off td { color: #909090; }
.pick { padding: 0; }
.pick button { display: grid; place-items: center; width: 16px; height: 14px; }
.sort { float: right; width: 8px; height: 8px; margin: 3px 2px 0 0; }
.c4 { width: 4px; } .c10 { width: 10px; } .c16 { width: 16px; } .c24 { width: 24px; }
.c50 { width: 50px; } .c55 { width: 55px; } .c60 { width: 60px; } .c65 { width: 65px; }
.c83 { width: 83px; } .c100 { width: 100px; } .c200 { width: 200px; }
th:empty, td:empty { padding: 0; }
.use { display: flex; gap: 5px; height: 14px; align-items: center; }
.use span { width: 27px; text-align: right; }
.use i { height: 12px; background: #40b8ee; }
.scroll { display: flex; height: 17px; margin-top: auto; border-top: 1px solid var(--line); background: var(--face); }
.scroll button { display: grid; place-items: center; width: 16px; border: 1px solid; border-color: #fff #808080 #808080 #fff; }
.track { flex: 1; background: var(--shade); }
.thumb { width: 64%; height: 16px; background: var(--face); border: 1px solid; border-color: #fff #808080 #808080 #fff; }
.thumb.short { width: 80%; }
.thumb.long { width: 95%; }
.status { flex: none; height: 19px; padding: 1px 2px; border: solid; border-width: 0 1px 1px; border-color: #e4e0d8 #e4e0d8 #e4e0d8 #808080; }
.run { border-top: 1px solid #808080; margin: 7px 3px 2px 1px; }

.dialog { display: flex; gap: 16px; padding: 7px 8px 0; }
.w-bt .dialog { gap: 17px; }
.form { display: flex; flex: 1; flex-direction: column; gap: 7px; min-width: 0; }
.row { display: flex; align-items: flex-end; justify-content: flex-end; gap: 6px; height: 18px; white-space: nowrap; }
.row > label, .lab { line-height: 17px; }
.row.dim .field { color: #000; }
.tall { height: 19px; }
.low { height: 13px; }
.cell { flex: none; width: 126px; }
.form hr { width: 100%; height: 3px; margin: 0; border: 0; border-bottom: 1px solid var(--shade); }
.side { display: flex; flex: none; flex-direction: column; gap: 3px; width: 59px; }
.side.big { width: 83px; }
.side .first { margin-bottom: 6px; }
.radios { display: flex; align-items: center; height: 18px; }
.low .radios { height: 13px; }
.radios label { margin: 0 10px 0 3px; }
.radios input { appearance: none; flex: none; width: 12px; height: 12px; background: #fff; border: 1px solid var(--line); }
.radios input[type="radio"] { border-radius: 50%; border-color: #404040 #eee #eee #404040; }
.radios input[type="radio"]:checked { background: radial-gradient(#000 2px, #fff 3px); }
.speed, .cred { display: flex; align-items: center; }
.speed .field { width: 84px; }
.cred .field { width: 108px; }
.bare { margin: 0 4px; }
.speed .bare { margin-right: 9px; }
.specks-to { background: linear-gradient(#000, #000) 3px 5px / 3px 1px no-repeat, linear-gradient(#000, #000) 5px 12px / 1px 1px no-repeat, linear-gradient(#000, #000) 32px 4px / 3px 1px no-repeat, linear-gradient(#000, #000) 37px 4px / 3px 1px no-repeat, linear-gradient(#000, #000) 52px 12px / 1px 1px no-repeat, linear-gradient(#000, #000) 62px 12px / 1px 1px no-repeat, #fff; }
.specks-user { background: linear-gradient(#000, #000) 3px 11px / 1px 2px no-repeat, linear-gradient(#000, #000) 24px 4px / 1px 1px no-repeat, #fff; }
.prof-top { display: flex; align-items: flex-start; padding: 7px 5px 12px 8px; }
.prof-top > label { width: 30px; line-height: 18px; }
.prof-top .side { margin-left: 11px; }

.chart { position: relative; height: 248px; border: 2px solid; border-width: 2px 1px 1px 2px; border-color: #606068 #fff #fff #606068; }
.legend { position: absolute; left: 2px; bottom: 3px; width: 98px; height: 38px; margin: 0; padding: 2px; border: 1px solid #000; background: #fff; list-style: none; }
.legend li { display: flex; align-items: center; gap: 3px; height: 16px; }
.legend i { width: 14px; height: 13px; border: 1px solid #000; }
.legend b { margin-left: 3px; font-weight: normal; }
.tx { background: #00f; }
.rx { background: #f00; }
```
